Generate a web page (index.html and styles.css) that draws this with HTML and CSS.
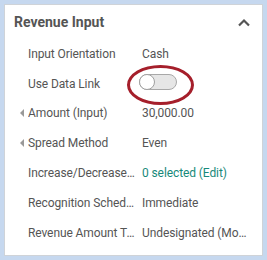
FILE: index.html
```html
<!DOCTYPE html>
<html lang="en">
<head>
    <meta charset="UTF-8" />
    <title>Revenue Input</title>
    <link rel="stylesheet" href="styles.css">
</head>
<body>
<div class="panel">
    <div class="panel-header">
        <h2>Revenue Input</h2>
        <svg class="chevron" width="14" height="9" viewBox="0 0 14 9">
            <polyline points="2,7.5 7,2.5 12,7.5" fill="none" stroke="#555" stroke-width="2.2" />
        </svg>
    </div>
    <div class="rows">
        <div class="row">
            <span class="label">Input Orientation</span>
            <span class="value">Cash</span>
        </div>
        <div class="row">
            <span class="label">Use Data Link</span>
            <span class="value switch-cell">
                <span class="toggle">
                    <span class="knob"></span>
                    <span class="highlight"></span>
                </span>
            </span>
        </div>
        <div class="row">
            <i class="arrow"></i>
            <span class="label">Amount (Input)</span>
            <span class="value">30,000.00</span>
        </div>
        <div class="row">
            <i class="arrow"></i>
            <span class="label">Spread Method</span>
            <span class="value">Even</span>
        </div>
        <div class="row">
            <span class="label">Increase/Decrease Schedule</span>
            <span class="value link">0 selected (Edit)</span>
        </div>
        <div class="row">
            <span class="label">Recognition Schedule</span>
            <span class="value">Immediate</span>
        </div>
        <div class="row">
            <span class="label">Revenue Amount Type</span>
            <span class="value">Undesignated (Monthly)</span>
        </div>
    </div>
</div>
</body>
</html>
```

FILE: styles.css
```css
body {
    margin: 0;
    padding: 4px;
    background-color: #c6d8ef;
    font-family: Roboto, "Liberation Sans", sans-serif;
    color: #555;
}
.panel {
    box-sizing: border-box;
    width: 259px;
    height: 252px;
    background-color: white;
    border: 1px solid #cfd3d8;
}
.panel-header {
    display: flex;
    align-items: center;
    justify-content: space-between;
    height: 34px;
    padding: 0 11px 0 9px;
}
.panel-header h2 {
    margin: 0;
    font-size: 14px;
    font-weight: bold;
    color: #555;
}
.chevron {
    display: block;
    margin-top: 1px;
}
.row {
    position: relative;
    display: flex;
    align-items: center;
    height: 29.8px;
    padding: 0 14px 0 23px;
    font-size: 12px;
    letter-spacing: -0.1px;
}
.label {
    width: 108px;
    margin-right: 6px;
    white-space: nowrap;
    overflow: hidden;
    text-overflow: ellipsis;
}
.arrow {
    position: absolute;
    left: 15px;
    top: 50%;
    margin-top: -4px;
    width: 0;
    height: 0;
    border-top: 4px solid transparent;
    border-bottom: 4px solid transparent;
    border-right: 4px solid #999;
}
.value {
    flex: 1;
    min-width: 0;
    white-space: nowrap;
    overflow: hidden;
    text-overflow: ellipsis;
}
.switch-cell {
    overflow: visible;
}
.link {
    color: #17897a;
}
.toggle {
    position: relative;
    display: block;
    box-sizing: border-box;
    width: 38px;
    height: 16px;
    margin: -4px 0 0 -3px;
    border: 1px solid #a8a8a8;
    border-radius: 8px;
    background-color: #e6e6e6;
}
.knob {
    position: absolute;
    left: -1px;
    top: -1px;
    box-sizing: border-box;
    width: 16px;
    height: 16px;
    border: 1px solid #a0a0a0;
    border-radius: 50%;
    background-color: white;
}
.highlight {
    position: absolute;
    left: -13px;
    top: -10px;
    box-sizing: border-box;
    width: 67px;
    height: 40px;
    border: 3px solid #a51f2b;
    border-radius: 50%;
}
```
